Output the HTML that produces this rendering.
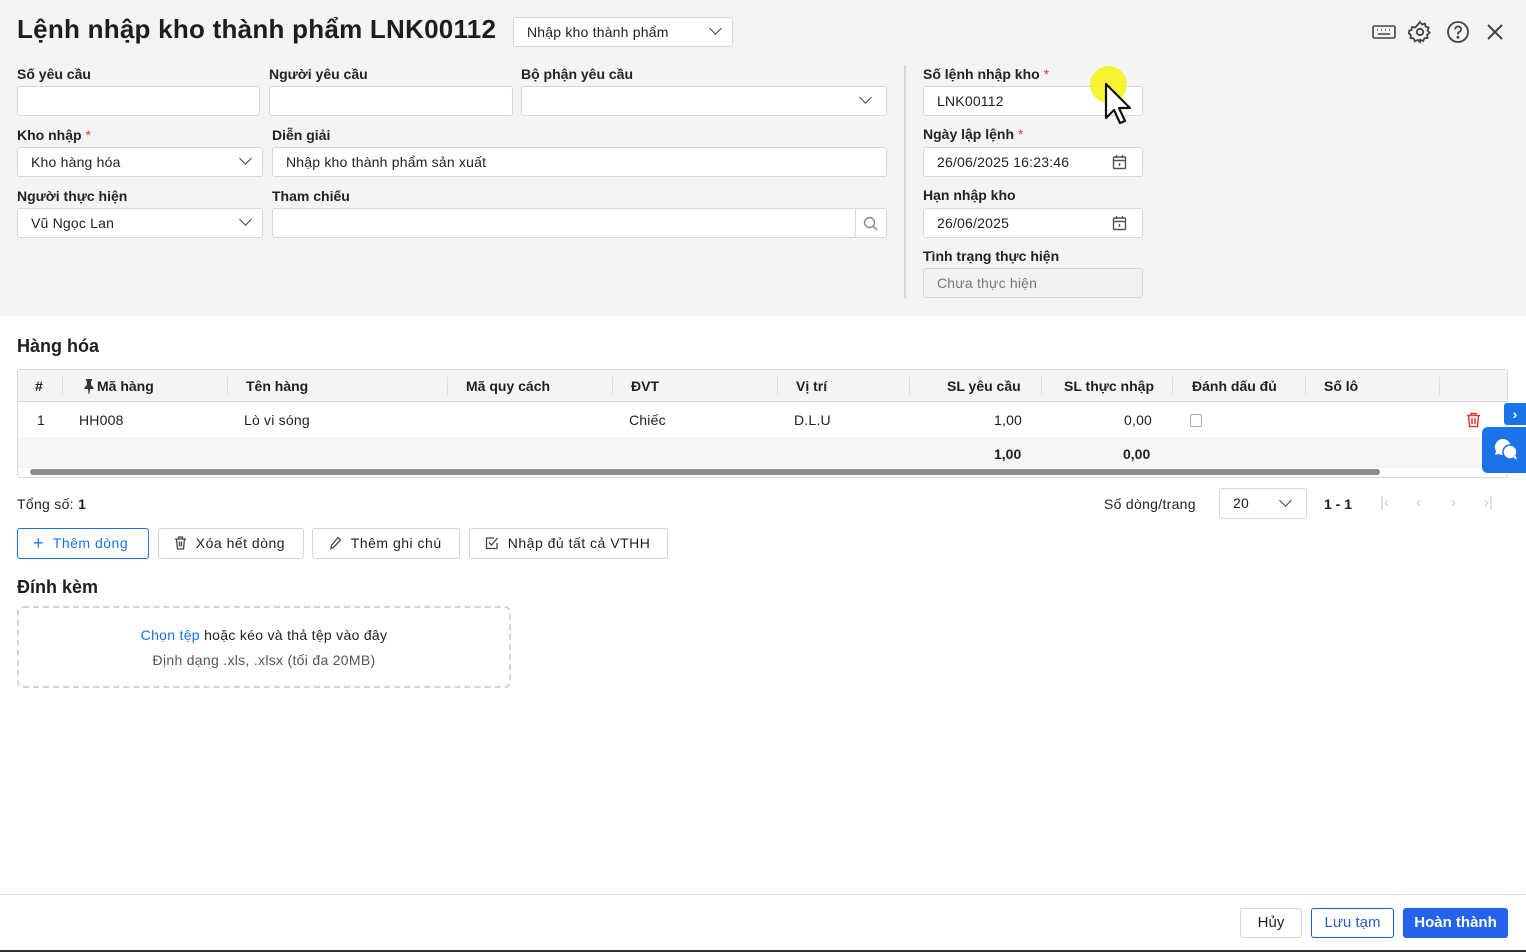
<!DOCTYPE html>
<html><head><meta charset="utf-8"><style>
*{box-sizing:border-box;margin:0;padding:0}
body{width:1526px;height:952px;position:relative;font-family:"Liberation Sans",sans-serif;font-size:14px;color:#1f1f1f;background:#fff;overflow:hidden}
.a{position:absolute}
.top{left:0;top:0;width:1526px;height:316px;background:#f4f4f6}
.lbl{position:absolute;font-size:14px;font-weight:bold;color:#222}
.req{color:#e53935;font-weight:normal}
.in{position:absolute;height:30px;background:#fff;border:1px solid #d5d7dc;border-radius:3px;padding:0 13px;line-height:28px;font-size:14px;letter-spacing:.2px}
.chev{position:absolute;right:12px;width:9px;height:9px;border-right:1.5px solid #444;border-bottom:1.5px solid #444;transform:rotate(45deg);top:6px}
.th{position:absolute;top:378px;font-weight:bold;font-size:14px}
.td{position:absolute;top:412px;font-size:14px;letter-spacing:.2px}
.sep{position:absolute;top:377px;width:1px;height:18px;background:#ddd}
.btn{position:absolute;top:528px;height:31px;border:1px solid #cfd2d8;border-radius:3px;background:#fff;line-height:29px;font-size:14px;letter-spacing:.5px}
</style></head><body>
<div class="a top"></div>
<div class="a" style="left:17px;top:14px;font-size:26px;font-weight:bold;color:#1d1d1d;letter-spacing:.25px">Lệnh nhập kho thành phẩm LNK00112</div>
<div class="in" style="left:513px;top:17px;width:220px">Nhập kho thành phẩm<span class="chev"></span></div>
<svg class="a" style="left:1371px;top:21px" width="26" height="22" viewBox="0 0 26 22" fill="none" stroke="#444" stroke-width="1.6"><rect x="2" y="5" width="22" height="12" rx="1.5"/><path d="M6 9h1M10 9h1M14 9h1M18 9h1M7 13h12"/></svg>
<svg class="a" style="left:1408px;top:20px" width="24" height="24" viewBox="0 0 24 24" fill="none" stroke="#444" stroke-width="1.8"><circle cx="12" cy="12" r="3.2"/><path d="M12 2l2 2.5 3-1 .6 3.1 3 .9-1 3 2 2.3-2.5 2 .5 3.1-3.1.3-1.4 2.8-2.9-1.3L12 22l-2.2-2.1-2.9 1.3-1.4-2.8-3.1-.3.5-3.1-2.5-2L1.4 11l-1 0 3-.9L4 7l3 .5L10 4.5z"/></svg>
<svg class="a" style="left:1446px;top:20px" width="24" height="24" viewBox="0 0 24 24" fill="none" stroke="#444" stroke-width="1.8"><circle cx="12" cy="12" r="10"/><path d="M9.2 9.3a2.9 2.9 0 1 1 3.8 2.8c-.7.3-1 .8-1 1.6v.8"/><circle cx="12" cy="17.3" r=".6" fill="#444"/></svg>
<svg class="a" style="left:1485px;top:22px" width="20" height="20" viewBox="0 0 20 20" stroke="#444" stroke-width="2"><path d="M3 3l14 14M17 3L3 17"/></svg>

<div class="lbl" style="left:17px;top:66px">Số yêu cầu</div>
<div class="in" style="left:17px;top:86px;width:243px"></div>
<div class="lbl" style="left:269px;top:66px">Người yêu cầu</div>
<div class="in" style="left:269px;top:86px;width:244px"></div>
<div class="lbl" style="left:521px;top:66px">Bộ phận yêu cầu</div>
<div class="in" style="left:521px;top:86px;width:366px"><span class="chev" style="right:16px"></span></div>

<div class="lbl" style="left:17px;top:127px">Kho nhập <span class="req">*</span></div>
<div class="in" style="left:17px;top:147px;width:246px">Kho hàng hóa<span class="chev"></span></div>
<div class="lbl" style="left:272px;top:127px">Diễn giải</div>
<div class="in" style="left:272px;top:147px;width:615px">Nhập kho thành phẩm sản xuất</div>

<div class="lbl" style="left:17px;top:188px">Người thực hiện</div>
<div class="in" style="left:17px;top:208px;width:246px">Vũ Ngọc Lan<span class="chev"></span></div>
<div class="lbl" style="left:272px;top:188px">Tham chiếu</div>
<div class="in" style="left:272px;top:208px;width:615px"><span class="a" style="left:582px;top:0;width:1px;height:28px;background:#d5d7dc"></span>
<svg class="a" style="left:590px;top:7px" width="15" height="15" viewBox="0 0 15 15" fill="none" stroke="#888" stroke-width="1.4"><circle cx="6.5" cy="6.5" r="5"/><path d="M10 10l4 4"/></svg></div>

<div class="a" style="left:904px;top:65px;width:2px;height:233px;background:#d8d8dc"></div>
<div class="lbl" style="left:923px;top:66px">Số lệnh nhập kho <span class="req">*</span></div>
<div class="in" style="left:923px;top:86px;width:220px">LNK00112</div>
<div class="lbl" style="left:923px;top:126px">Ngày lập lệnh <span class="req">*</span></div>
<div class="in" style="left:923px;top:147px;width:220px">26/06/2025 16:23:46</div>
<div class="lbl" style="left:923px;top:187px">Hạn nhập kho</div>
<div class="in" style="left:923px;top:208px;width:220px">26/06/2025</div>
<svg class="a" style="left:1112px;top:154px" width="15" height="16" viewBox="0 0 15 16" fill="none" stroke="#555" stroke-width="1.4"><rect x="1.5" y="3" width="12" height="11.5" rx="1"/><path d="M1.5 6.5h12M4.5 1v3M10.5 1v3M7.5 9v3"/></svg>
<svg class="a" style="left:1112px;top:215px" width="15" height="16" viewBox="0 0 15 16" fill="none" stroke="#555" stroke-width="1.4"><rect x="1.5" y="3" width="12" height="11.5" rx="1"/><path d="M1.5 6.5h12M4.5 1v3M10.5 1v3M7.5 9v3"/></svg>
<div class="lbl" style="left:923px;top:248px">Tình trạng thực hiện</div>
<div class="in" style="left:923px;top:268px;width:220px;background:#f2f2f4;color:#777">Chưa thực hiện</div>
<div class="a" style="left:1090px;top:66px;width:37px;height:37px;border-radius:50%;background:#f7f21f;opacity:.9"></div>
<svg class="a" style="left:1104px;top:82px" width="30" height="44" viewBox="0 0 30 44"><path d="M2 2v34l8-8 6 13 5-2-6-13h11z" fill="#fff" stroke="#111" stroke-width="2.2" stroke-linejoin="round"/></svg>

<div class="a" style="left:17px;top:336px;font-size:18px;font-weight:bold">Hàng hóa</div>
<div class="a" style="left:17px;top:369px;width:1491px;height:109px;border:1px solid #d7d9de;border-radius:3px"></div>
<div class="a" style="left:18px;top:370px;width:1489px;height:32px;background:#f3f4f6;border-bottom:1px solid #d7d9de"></div>
<div class="th" style="left:35px">#</div>
<div class="sep" style="left:62px"></div>
<svg class="a" style="left:84px;top:379px" width="10" height="15" viewBox="0 0 10 15" fill="#333"><path d="M2 0h6v1.5L7 2v4l2.5 2.5V10H6l-.6 5h-.8L4 10H.5V8.5L3 6V2L2 1.5z"/></svg>
<div class="th" style="left:97px">Mã hàng</div>
<div class="sep" style="left:227px"></div>
<div class="th" style="left:246px">Tên hàng</div>
<div class="sep" style="left:447px"></div>
<div class="th" style="left:466px">Mã quy cách</div>
<div class="sep" style="left:612px"></div>
<div class="th" style="left:631px">ĐVT</div>
<div class="sep" style="left:777px"></div>
<div class="th" style="left:796px">Vị trí</div>
<div class="sep" style="left:909px"></div>
<div class="th" style="left:947px">SL yêu cầu</div>
<div class="sep" style="left:1041px"></div>
<div class="th" style="left:1064px">SL thực nhập</div>
<div class="sep" style="left:1172px"></div>
<div class="th" style="left:1192px">Đánh dấu đủ</div>
<div class="sep" style="left:1305px"></div>
<div class="th" style="left:1324px">Số lô</div>
<div class="sep" style="left:1439px"></div>
<div class="td" style="left:37px">1</div>
<div class="td" style="left:79px">HH008</div>
<div class="td" style="left:244px">Lò vi sóng</div>
<div class="td" style="left:629px">Chiếc</div>
<div class="td" style="left:794px">D.L.U</div>
<div class="td" style="left:994px">1,00</div>
<div class="td" style="left:1124px">0,00</div>
<div class="a" style="left:1190px;top:414px;width:12px;height:13px;border:1px solid #aab;border-radius:2px;background:#fff"></div>
<svg class="a" style="left:1466px;top:412px" width="15" height="16" viewBox="0 0 15 16" fill="none" stroke="#e53935" stroke-width="1.5"><path d="M1 3.5h13M5 3.5V1.5h5v2M2.5 3.5l1 11h8l1-11M6 6v6M9 6v6"/></svg>
<div class="a" style="left:18px;top:437px;width:1489px;height:31px;background:#f6f6f7"></div>
<div class="a" style="left:994px;top:446px;font-weight:bold">1,00</div>
<div class="a" style="left:1123px;top:446px;font-weight:bold">0,00</div>
<div class="a" style="left:30px;top:469px;width:1350px;height:6px;border-radius:3px;background:#8d8d8d"></div>
<div class="a" style="left:1504px;top:403px;width:22px;height:22px;background:#1a73e8;border-radius:3px 0 0 3px;color:#fff;font-weight:bold;text-align:center;line-height:22px">›</div>
<div class="a" style="left:1482px;top:427px;width:44px;height:46px;background:#1a73e8;border-radius:6px 0 0 6px"></div>
<svg class="a" style="left:1493px;top:437px" width="26" height="26" viewBox="0 0 26 26" fill="#fff"><path d="M10 2a8 8 0 0 0-7 12l-1 4 4-1a8 8 0 1 0 4-15z"/><circle cx="17" cy="15" r="7" stroke="#1a73e8" stroke-width="1.5"/><path d="M20 20l4 3-1-4z"/></svg>

<div class="a" style="left:17px;top:496px;letter-spacing:.3px">Tổng số: <b>1</b></div>
<div class="a" style="left:1104px;top:496px;letter-spacing:.3px">Số dòng/trang</div>
<div class="in" style="left:1219px;top:488px;width:88px;height:31px">20<span class="chev" style="right:16px;top:7px"></span></div>
<div class="a" style="left:1324px;top:496px;font-weight:bold">1 - 1</div>
<div class="a" style="left:1380px;top:494px;color:#ccc;font-size:15px">|‹</div>
<div class="a" style="left:1416px;top:494px;color:#ccc;font-size:15px">‹</div>
<div class="a" style="left:1451px;top:494px;color:#ccc;font-size:15px">›</div>
<div class="a" style="left:1484px;top:494px;color:#ccc;font-size:15px">›|</div>

<div class="btn" style="left:17px;width:132px;border-color:#1a73e8;color:#1a73e8;padding-left:15px"><span style="font-size:18px;vertical-align:-1px">+</span>&nbsp;&nbsp;Thêm dòng</div>
<div class="btn" style="left:158px;width:146px;padding-left:15px"><svg width="13" height="14" viewBox="0 0 13 14" fill="none" stroke="#444" stroke-width="1.3" style="vertical-align:-2px"><path d="M1 3h11M4.5 3V1h4v2M2.5 3l1 10h6l1-10M5.5 5.5v5M7.5 5.5v5"/></svg>&nbsp;&nbsp;Xóa hết dòng</div>
<div class="btn" style="left:312px;width:148px;padding-left:16px"><svg width="13" height="14" viewBox="0 0 13 14" fill="none" stroke="#444" stroke-width="1.3" style="vertical-align:-2px"><path d="M9 1.5l2.5 2.5-7 7.5L2 12.5l.5-3z"/></svg>&nbsp;&nbsp;Thêm ghi chú</div>
<div class="btn" style="left:469px;width:199px;padding-left:15px"><svg width="14" height="14" viewBox="0 0 14 14" fill="none" stroke="#444" stroke-width="1.3" style="vertical-align:-2px"><path d="M12 7v5.5H1.5V2H9"/><path d="M4 6.5l2.5 2.5L12.5 2"/></svg>&nbsp;&nbsp;Nhập đủ tất cả VTHH</div>

<div class="a" style="left:17px;top:577px;font-size:18px;font-weight:bold">Đính kèm</div>
<div class="a" style="left:17px;top:606px;width:494px;height:82px;border:2px dashed #d4d4d8;border-radius:6px;text-align:center;padding-top:15px;line-height:25px;letter-spacing:.3px"><span style="color:#1a73e8">Chọn tệp</span> hoặc kéo và thả tệp vào đây<br><span style="color:#555">Định dạng .xls, .xlsx (tối đa 20MB)</span></div>

<div class="a" style="left:0;top:894px;width:1526px;height:1px;background:#dfe1e5"></div>
<div class="a" style="left:1240px;top:908px;width:62px;height:30px;border:1px solid #cfd2d8;border-radius:3px;text-align:center;line-height:28px;font-size:15px">Hủy</div>
<div class="a" style="left:1311px;top:908px;width:83px;height:30px;border:1px solid #1a5fd8;border-radius:3px;text-align:center;line-height:28px;font-size:15px;color:#2e5ec9">Lưu tạm</div>
<div class="a" style="left:1403px;top:908px;width:105px;height:30px;background:#2563eb;border-radius:3px;text-align:center;line-height:30px;font-size:15px;color:#fff;font-weight:bold">Hoàn thành</div>
<div class="a" style="left:0;top:950px;width:1526px;height:2px;background:#333"></div>
</body></html>
